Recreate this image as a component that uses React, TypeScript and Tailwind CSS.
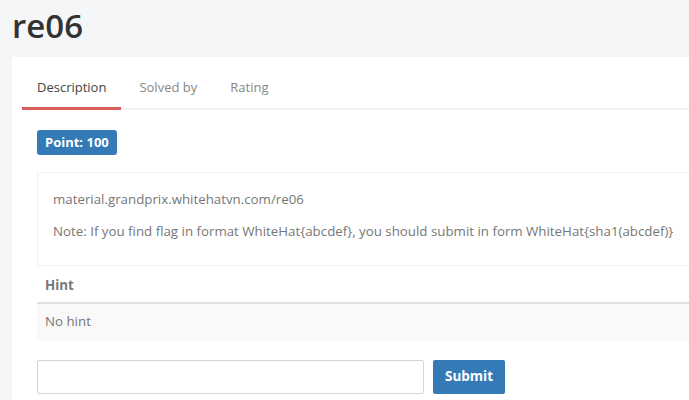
import React, { useState } from 'react';

export default function App() {
  const [flag, setFlag] = useState('');
  const tabs = ['Description', 'Solved by', 'Rating'];

  return (
    <div
      className="min-h-[400px] bg-[#f5f6f8] pl-3 pt-1 text-[#666]"
      style={{ fontFamily: '"Open Sans", "Noto Sans", sans-serif' }}
    >
      <h1 className="h-[53px] text-[33px] font-semibold leading-[44px] text-[#333]">re06</h1>

      <div className="bg-white pb-6">
        {/* tabs */}
        <ul className="ml-[10px] flex border-b-2 border-[#f2f2f2] pt-[11px]">
          {tabs.map((t, i) => (
            <li
              key={t}
              className={
                i === 0
                  ? 'mr-[3px] -mb-[2px] border-b-[3px] border-[#dc5c5c] px-[15px] pb-[9px] pt-[10px] text-[13px] text-[#444]'
                  : 'mr-[3px] -mb-[2px] border-b-[3px] border-transparent px-[15px] pb-[9px] pt-[10px] text-[13px] text-[#888]'
              }
            >
              {t}
            </li>
          ))}
        </ul>

        <div className="pl-[25px] pt-[19px]">
          <span className="inline-block rounded-[3px] bg-[#337ab7] px-[8px] py-[3px] text-[13px] font-bold leading-[19px] text-white">
            Point: 100
          </span>

          <div className="mt-[17px] border border-r-0 border-[#f0f0f0] px-[15px] pb-[24px] pt-[16px] text-[13.3px] leading-[20px] text-[#777]">
            <p>material.grandprix.whitehatvn.com/re06</p>
            <p className="mt-[12px]">
              Note: If you find flag in format WhiteHat{'{'}abcdef{'}'}, you should submit in form WhiteHat
              {'{'}sha1(abcdef){'}'}
            </p>
          </div>

          <table className="w-full text-left text-[13.3px]">
            <thead>
              <tr className="border-b-2 border-[#dde1e3]">
                <th className="h-[37px] px-2 pt-[5px] font-bold text-[#777]">Hint</th>
              </tr>
            </thead>
            <tbody>
              <tr className="bg-[#f9f9f9]">
                <td className="h-[38px] px-2 text-[#777]">No hint</td>
              </tr>
            </tbody>
          </table>

          <div className="mt-[19px] flex items-center gap-[9px]">
            <input
              value={flag}
              onChange={(e) => setFlag(e.target.value)}
              className="h-[34px] w-[387px] rounded-[2px] border border-[#d5d5d5] px-3 text-[13px] outline-none"
            />
            <button className="h-[34px] rounded-[2px] bg-[#337ab7] px-[12px] text-[13.5px] font-bold text-white">
              Submit
            </button>
          </div>
        </div>
      </div>
    </div>
  );
}
